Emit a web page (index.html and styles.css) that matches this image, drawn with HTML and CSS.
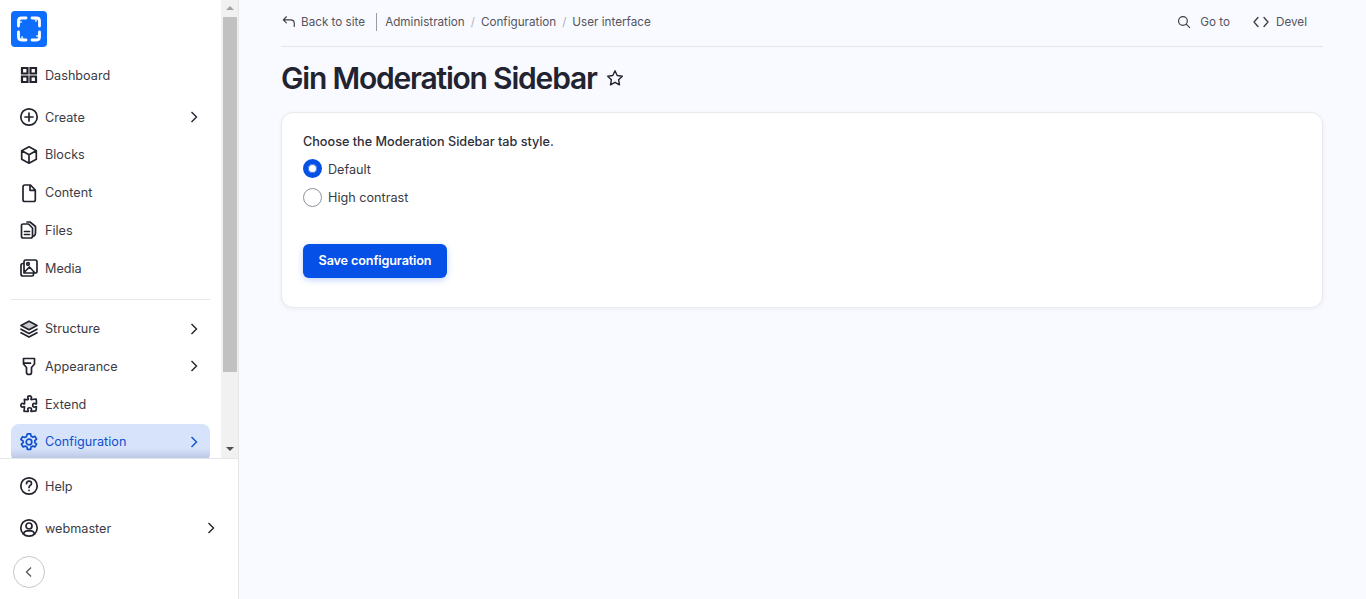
FILE: index.html
```html
<!DOCTYPE html>
<html lang="en">
<head>
  <meta charset="UTF-8" />
  <meta name="viewport" content="width=device-width, initial-scale=1.0"/>
  <title>Gin Moderation Sidebar</title>
  <link rel="stylesheet" href="styles.css">
</head>
<body>

  <aside class="sidebar">
    <div class="sidebar-top">
      <div class="menu-scroll">
        <a class="logo" href="#">
          <svg viewBox="0 0 36 36" width="36" height="36" fill="none" stroke="#fff" stroke-width="2.800" stroke-linecap="round" stroke-linejoin="round">
            <path d="M7.500 15V10q0-3 3-3h4.500"/>
            <path d="M21 7h4.500q3 0 3 3v5"/>
            <path d="M28.500 21v5q0 3-3 3H21"/>
            <path d="M15 29h-4.500q-3 0-3-3v-5"/>
            <path d="M7.500 11.500L10 11M24.500 7.500L25 10M28.500 24.500L26 25M11.500 28.500L11 26" stroke-width="2" opacity="0.7"/>
          </svg>
        </a>

        <ul class="menu menu-first">
          <li class="menu-item">
            <svg class="icon icon-bold" viewBox="0 0 20 20"><path d="M3 3h5.500v5.500H3zM11.500 3H17v5.500h-5.500zM3 11.500h5.500V17H3zM11.500 11.500H17V17h-5.500z"/></svg>
            Dashboard
          </li>
        </ul>

        <ul class="menu menu-content">
          <li class="menu-item">
            <svg class="icon" viewBox="0 0 20 20"><circle cx="10" cy="10" r="8.200"/><path d="M10 6v8M6 10h8"/></svg>
            Create
            <svg class="chevron" viewBox="0 0 10 12"><path d="M2.500 1l5 5-5 5"/></svg>
          </li>
          <li class="menu-item">
            <svg class="icon" viewBox="0 0 20 20"><path d="M10 1.800l7.300 3.900v8.600L10 18.200l-7.300-3.900V5.700zM2.900 5.800L10 9.800l7.100-4M10 9.800v8.200"/></svg>
            Blocks
          </li>
          <li class="menu-item">
            <svg class="icon" viewBox="0 0 20 20"><path d="M5.800 2h5.700l4.800 5v9.700q0 1.800-1.800 1.800H5.800Q4 18.500 4 16.700V3.800Q4 2 5.800 2zM11 2v5.300h5.300"/></svg>
            Content
          </li>
          <li class="menu-item">
            <svg class="icon" viewBox="0 0 20 20"><path d="M4.300 4h5.200l4 4v8.200q0 1.800-1.800 1.800H4.300q-1.800 0-1.800-1.800V5.800Q2.500 4 4.300 4zM8 2h3l5.500 4.500V13q0 2-1.500 3M5.500 11.500h5M5.500 14.500h5"/></svg>
            Files
          </li>
          <li class="menu-item">
            <svg class="icon" viewBox="0 0 20 20"><path d="M6.800 2h9.400Q18 2 18 3.800v9.400q0 1.800-1.800 1.800H5V3.800Q5 2 6.800 2zM5 5.500H4Q2 5.500 2 7.500V16q0 2 2 2h9q1.500 0 1.500-1.500V15M5.500 14l5-5 5 5.500"/><circle cx="9" cy="6" r="1.300"/></svg>
            Media
          </li>
        </ul>

        <ul class="menu menu-admin">
          <li class="menu-item">
            <svg class="icon" viewBox="0 0 20 20"><path class="layer-top" d="M10 2.200l8 4.300-8 4.300-8-4.300z"/><path d="M2 10.200l8 4.300 8-4.300M2 13.800l8 4.300 8-4.300"/></svg>
            Structure
            <svg class="chevron" viewBox="0 0 10 12"><path d="M2.500 1l5 5-5 5"/></svg>
          </li>
          <li class="menu-item">
            <svg class="icon" viewBox="0 0 20 20"><path d="M4.500 2.500h11v5.500l-3 3.500v5q0 2-2.500 2t-2.500-2v-5l-3-3.500zM4.500 7.200h7M15.500 7.200h0"/></svg>
            Appearance
            <svg class="chevron" viewBox="0 0 10 12"><path d="M2.500 1l5 5-5 5"/></svg>
          </li>
          <li class="menu-item">
            <svg class="icon icon-puzzle" viewBox="0 0 24 24"><path d="M14.250 6.087c0-.355.186-.676.401-.959.221-.29.349-.634.349-1.003 0-1.036-1.007-1.875-2.250-1.875s-2.250.84-2.250 1.875c0 .369.128.713.349 1.003.215.283.401.604.401.959a.64.64 0 01-.657.643 48.390 48.390 0 01-4.163-.3c.186 1.613.293 3.250.315 4.907a.656.656 0 01-.658.663c-.355 0-.676-.186-.959-.401a1.647 1.647 0 00-1.003-.349c-1.036 0-1.875 1.007-1.875 2.250s.84 2.250 1.875 2.250c.369 0 .713-.128 1.003-.349.283-.215.604-.401.959-.401.31 0 .555.26.532.57a48.039 48.039 0 01-.642 5.056c1.518.19 3.058.309 4.616.354a.64.64 0 00.657-.643c0-.355-.186-.676-.401-.959a1.647 1.647 0 01-.349-1.003c0-1.035 1.008-1.875 2.250-1.875 1.243 0 2.250.84 2.250 1.875 0 .369-.128.713-.349 1.003-.215.283-.4.604-.4.959 0 .333.277.599.61.58a48.100 48.100 0 005.427-.63 48.050 48.050 0 00.582-4.717.532.532 0 00-.533-.57c-.355 0-.676.186-.959.401-.29.221-.634.349-1.003.349-1.035 0-1.875-1.007-1.875-2.250s.84-2.250 1.875-2.250c.37 0 .713.128 1.003.349.283.215.604.401.96.401a.656.656 0 00.658-.663 48.422 48.422 0 00-.37-5.360c-1.886.342-3.810.574-5.766.689a.578.578 0 01-.61-.58z"/></svg>
            Extend
          </li>
          <li class="menu-item active">
            <svg class="icon" viewBox="0 0 20 20"><path d="M8.400 1.800h3.200l.5 2.400 1.600.9 2.300-.8 1.600 2.800-1.800 1.600v1.800l1.800 1.600-1.600 2.800-2.300-.8-1.600.9-.5 2.400H8.400l-.5-2.400-1.600-.9-2.300.8-1.600-2.800 1.800-1.600V9.100L1.900 7.500l1.600-2.800 2.300.8 1.600-.9z"/><circle cx="10" cy="10" r="2.800"/></svg>
            Configuration
            <svg class="chevron" viewBox="0 0 10 12"><path d="M2.500 1l5 5-5 5"/></svg>
          </li>
        </ul>
      </div>

      <div class="fake-scrollbar">
        <span class="arrow-up"></span>
        <div class="thumb"></div>
        <span class="arrow-down"></span>
      </div>
    </div>

    <div class="sidebar-footer">
      <div class="menu-item">
        <svg class="icon" viewBox="0 0 20 20"><circle cx="10" cy="10" r="8.200"/><path d="M7.500 7.700q0-2.500 2.500-2.500t2.500 2.300q0 1.300-1.300 2-1.200.7-1.200 2"/><path d="M10 14.300v.2"/></svg>
        Help
      </div>
      <div class="menu-item user-item">
        <svg class="icon" viewBox="0 0 20 20"><circle cx="10" cy="10" r="8.200"/><circle cx="10" cy="8" r="3"/><path d="M4.500 15.800q1-3 3.500-3h4q2.500 0 3.500 3"/></svg>
        webmaster
        <svg class="chevron" viewBox="0 0 10 12"><path d="M2.500 1l5 5-5 5"/></svg>
      </div>
      <button class="collapse-btn" type="button" aria-label="Collapse">
        <svg viewBox="0 0 10 12" width="10" height="12"><path d="M7 1.500L2.500 6 7 10.500"/></svg>
      </button>
    </div>
  </aside>

  <main class="page">
    <div class="topbar">
      <a class="back-link" href="#">
        <svg class="top-icon" viewBox="0 0 16 16"><path d="M5 2L1.500 5.500 5 9M1.500 5.500H10q4 0 4 4V13"/></svg>
        Back to site
      </a>
      <nav class="breadcrumb">
        <a href="#">Administration</a><span class="sep">/</span>
        <a href="#">Configuration</a><span class="sep">/</span>
        <a href="#">User interface</a>
      </nav>
      <div class="top-actions">
        <a href="#">
          <svg class="top-icon search-icon" viewBox="0 0 16 16"><circle cx="6.800" cy="6.800" r="5"/><path d="M10.500 10.500L14.500 14.500"/></svg>
          Go to
        </a>
        <a href="#">
          <svg class="top-icon code-icon" viewBox="0 0 16 12"><path d="M5 1.500L1 6l4 4.500M11 1.500L15 6l-4 4.500"/></svg>
          Devel
        </a>
      </div>
    </div>

    <div class="title-row">
      <h1>Gin Moderation Sidebar</h1>
      <svg class="star" viewBox="0 0 18 18"><path d="M9 1.800l2.200 4.700 5.100.7-3.700 3.500.9 5.100L9 13.300l-4.500 2.500.9-5.100-3.700-3.500 5.100-.7z"/></svg>
    </div>

    <form class="card">
      <p class="form-label">Choose the Moderation Sidebar tab style.</p>
      <label class="radio-row">
        <span class="radio checked"></span>
        Default
      </label>
      <label class="radio-row">
        <span class="radio"></span>
        High contrast
      </label>
      <button type="button" class="btn-save">Save configuration</button>
    </form>
  </main>

</body>
</html>
```

FILE: styles.css
```css
* {
  margin: 0;
  padding: 0;
  box-sizing: border-box;
  font-family: 'Inter', sans-serif;
}

html,
body {
  height: 100%;
  overflow: hidden;
}

body {
  background-color: #f9faff;
  color: #3b3b45;
  font-size: 12.65px;
  display: flex;
}

a {
  color: inherit;
  text-decoration: none;
}

ul {
  list-style: none;
}

/* sidebar */
.sidebar {
  width: 239px;
  height: 599px;
  background-color: white;
  border-right: 1px solid #e6e6ea;
  display: flex;
  flex-direction: column;
  flex-shrink: 0;
}

.sidebar-top {
  height: 459px;
  display: flex;
  border-bottom: 1px solid #e6e6ea;
  overflow: hidden;
}

.menu-scroll {
  width: 221px;
  padding: 11px 11px 0;
  flex-shrink: 0;
}

.logo {
  display: block;
  width: 36px;
  height: 36px;
  background-color: #0d6efd;
  border-radius: 4px;
}

.menu-item {
  display: flex;
  align-items: center;
  height: 34px;
  padding: 0 8px;
  border-radius: 8px;
  color: #3b3b45;
  font-size: 12.65px;
}

.menu-first {
  margin-top: 11px;
}

.menu-content {
  margin-top: 8.3px;
  padding-bottom: 13.7px;
  border-bottom: 1px solid #e8e8ec;
}

.menu-admin {
  margin-top: 11.9px;
}

.menu li + li {
  margin-top: 3.7px;
}

.icon {
  width: 20px;
  height: 20px;
  margin-right: 6px;
  flex-shrink: 0;
  fill: none;
  stroke: #23232d;
  stroke-width: 1.7;
  stroke-linejoin: round;
  stroke-linecap: round;
}

.icon-bold {
  stroke-width: 2.2;
  stroke-linejoin: miter;
}

.icon-puzzle {
  stroke-width: 2;
}

.layer-top {
  fill: #c9c9ce;
}

.chevron {
  width: 10px;
  height: 12px;
  margin-left: auto;
  margin-right: 3px;
  fill: none;
  stroke: #23232d;
  stroke-width: 1.4;
}

.menu li.active {
  height: 38px;
  margin-top: 3px;
  padding-bottom: 3px;
  color: #0f50cf;
  background-color: #d7e3fa;
  background-image: linear-gradient(to bottom, transparent 24px, #bcc9e6 34px);
}

.menu-item.active .icon,
.menu-item.active .chevron {
  stroke: #0f50cf;
}

.fake-scrollbar {
  width: 17px;
  background-color: #f1f1f1;
  display: flex;
  flex-direction: column;
  align-items: center;
  position: relative;
}

.arrow-up,
.arrow-down {
  display: block;
  width: 0;
  height: 0;
  border-left: 4px solid transparent;
  border-right: 4px solid transparent;
}

.arrow-up {
  margin-top: 6px;
  border-bottom: 4px solid #a3a3a3;
}

.arrow-down {
  margin-top: 75px;
  border-top: 4px solid #505050;
}

.thumb {
  width: 14px;
  height: 355px;
  margin-top: 7px;
  background-color: #c1c1c1;
}

.sidebar-footer {
  flex: 1;
  padding: 10px 11px 0;
}

.sidebar-footer .menu-item {
  height: 34px;
}

.user-item {
  margin-top: 8px;
  padding-right: 0;
}

.user-item .chevron {
  margin-right: 11px;
}

.collapse-btn {
  width: 32px;
  height: 32px;
  margin: 11px 0 0 2px;
  border: 1px solid #c8c8cc;
  border-radius: 50%;
  background-color: white;
  display: flex;
  align-items: center;
  justify-content: center;
}

.collapse-btn svg {
  fill: none;
  stroke: #55555e;
  stroke-width: 1.3;
}

/* page */
.page {
  flex: 1;
  padding: 0 43px 0 42px;
}

.topbar {
  height: 47px;
  display: flex;
  align-items: center;
  border-bottom: 1px solid #e4e4e9;
  color: #55555e;
  font-size: 11.7px;
  padding-bottom: 3px;
}

.back-link {
  display: flex;
  align-items: center;
  height: 18px;
  padding-right: 11px;
  border-right: 1px solid #9a9aa2;
  padding-left: 1px;
}

.top-icon {
  width: 14px;
  height: 14px;
  margin-right: 5px;
  fill: none;
  stroke: #3b3b45;
  stroke-width: 1.3;
  stroke-linecap: round;
  stroke-linejoin: round;
}

.breadcrumb {
  margin-left: 8px;
  display: flex;
  align-items: center;
}

.sep {
  color: #b0b0b8;
  margin: 0 6px;
}

.top-actions {
  margin-left: auto;
  display: flex;
  align-items: center;
  gap: 23px;
  padding-right: 16px;
}

.top-actions a {
  display: flex;
  align-items: center;
}

.search-icon {
  margin-right: 9px;
}

.code-icon {
  width: 16px;
  height: 12px;
  margin-right: 7px;
}

.title-row {
  display: flex;
  align-items: center;
  margin-top: 12px;
  height: 37px;
}

h1 {
  font-size: 30px;
  font-weight: 600;
  letter-spacing: -0.04em;
  color: #222330;
}

.star {
  width: 18px;
  height: 18px;
  margin-left: 9px;
  fill: none;
  stroke: #222330;
  stroke-width: 1.4;
  stroke-linejoin: round;
}

.card {
  margin-top: 16px;
  height: 196px;
  background-color: white;
  border: 1px solid #e9e9ee;
  border-radius: 12px;
  box-shadow: 0 1px 4px rgba(0, 0, 0, 0.06);
  padding: 21px 21px;
}

.form-label {
  color: #2e2e38;
  font-size: 12.65px;
  font-weight: 450;
  line-height: 16px;
}

.radio-row {
  display: flex;
  align-items: center;
  height: 20px;
  margin-top: 8px;
  font-size: 12.65px;
  color: #3b3b45;
}

.form-label + .radio-row {
  margin-top: 9px;
}

.radio-row .radio {
  width: 19px;
  height: 19px;
  margin-right: 6px;
  border: 1px solid #8e929c;
  border-radius: 50%;
  background-color: white;
}

.radio-row .radio.checked {
  margin-bottom: 2px;
  border: 5px solid #0550e6;
  box-shadow: 0 0 0 1px #3f78ea inset;
}

.btn-save {
  display: block;
  margin-top: 37px;
  padding-bottom: 2px;
  width: 144px;
  height: 34px;
  background-color: #0550e6;
  color: white;
  border: none;
  border-radius: 6px;
  font-size: 12.65px;
  font-weight: 600;
  letter-spacing: -0.01em;
  box-shadow: 0 2px 6px rgba(5, 80, 230, 0.25);
}
```
